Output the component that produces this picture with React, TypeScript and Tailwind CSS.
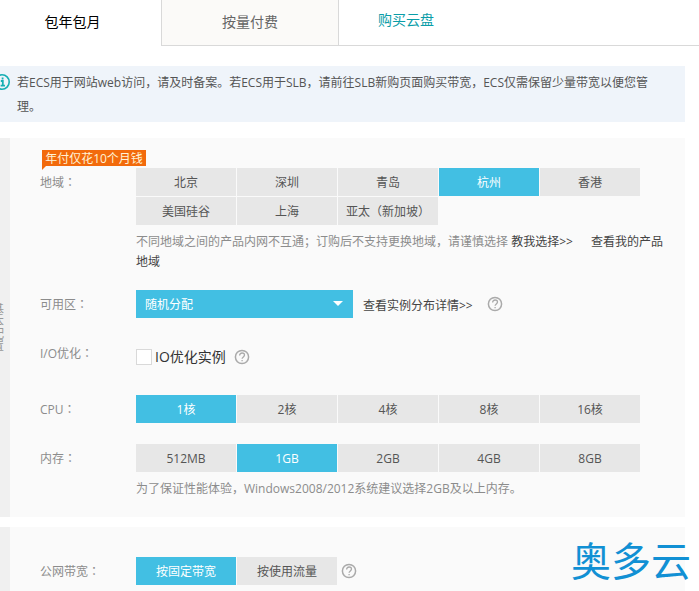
import { useState, type ReactNode } from "react";

type Option = { value: string; label: string };

const toOptions = (labels: string[]): Option[] =>
  labels.map((label) => ({ value: label, label }));

const regions = toOptions(["北京", "深圳", "青岛", "杭州", "香港", "美国硅谷", "上海", "亚太（新加坡）"]);
const cpus = toOptions(["1核", "2核", "4核", "8核", "16核"]);
const memories = toOptions(["512MB", "1GB", "2GB", "4GB", "8GB"]);
const billing = toOptions(["按固定带宽", "按使用流量"]);

function Segments({ name, options, initial }: { name: string; options: Option[]; initial: string }) {
  const [selected, setSelected] = useState(initial);
  return (
    <div role="group" aria-label={name} className="flex max-w-[505px] flex-wrap gap-px">
      {options.map((option) => (
        <button
          key={option.value}
          type="button"
          aria-pressed={option.value === selected}
          onClick={() => setSelected(option.value)}
          className={
            option.value === selected
              ? "h-7 w-[100px] whitespace-nowrap bg-[#42bfe3] pt-0.5 text-white"
              : "h-7 w-[100px] whitespace-nowrap bg-[#e7e7e7] pt-0.5 text-[#555]"
          }
        >
          {option.label}
        </button>
      ))}
    </div>
  );
}

function HelpButton({ label }: { label: string }) {
  return (
    <button type="button" aria-label={label} className="size-4 shrink-0 text-[#aaa]">
      <svg viewBox="0 0 16 16" className="size-4" fill="none" stroke="currentColor" aria-hidden="true">
        <circle cx="8" cy="8" r="6.6" strokeWidth="1.5" />
        <path d="M5.6 6.4c0-1.5 1-2.4 2.5-2.4 1.4 0 2.4.9 2.4 2.1 0 1.700-2.400 1.900-2.400 3.700" strokeWidth="1.3" />
        <path d="M8.1 10.900v1.400" strokeWidth="1.300" />
      </svg>
    </button>
  );
}

function Field({ label, children }: { label: string; children: ReactNode }) {
  return (
    <div className="flex items-start">
      <div className="w-24 shrink-0 leading-[30px] text-[#8c8c8c]">
        {label}
        <span className="font-['Noto_Sans_CJK_TC',sans-serif] leading-none">：</span>
      </div>
      <div className="min-w-0 flex-1">{children}</div>
    </div>
  );
}

function Panel({ title, children }: { title?: string; children: ReactNode }) {
  return (
    <section className="mr-3.5 flex bg-[#fafafa]">
      <div className="flex w-2.5 shrink-0 items-center justify-end overflow-hidden bg-[#f0f0f0]">
        {title && (
          <h2 className="mr-1.5 w-3 shrink-0 text-center leading-3 text-[#999]">{title}</h2>
        )}
      </div>
      <div className="min-w-0 flex-1 pl-[30px] pr-4">{children}</div>
    </section>
  );
}

export default function App() {
  return (
    <main className="relative overflow-hidden bg-white font-['Open_Sans','Noto_Sans_CJK_SC',sans-serif] text-xs">
      <nav className="flex h-[46px] text-sm">
        <button type="button" className="w-[161px] pb-0.5 pr-4 text-black">
          包年包月
        </button>
        <button type="button" className="w-[178px] border-x border-b border-[#d9d9d9] bg-[#fbfaf8] pb-0.5 text-[#666]">
          按量付费
        </button>
        <div className="flex-1 border-b border-[#d9d9d9] pl-[39px] pt-2.5 leading-5">
          <a href="#disk" className="text-[#0a9da8]">
            购买云盘
          </a>
        </div>
      </nav>

      <div className="mr-3.5 mt-5 flex bg-[#eff4fa] pb-[3px] pr-6 pt-[5px]">
        <svg viewBox="0 0 18 18" className="-ml-[7px] mr-1.5 mt-0.5 size-[18px] shrink-0" fill="none" stroke="#16aeb4" aria-hidden="true">
          <circle cx="9" cy="9" r="7.2" strokeWidth="1.6" />
          <path d="M9.600 4.600v1.900M7.800 8H9.800v4.500M7.600 12.600h4.400" strokeWidth="1.800" />
        </svg>
        <p className="leading-6 text-[#555]">
          若ECS用于网站web访问，请及时备案。若ECS用于SLB，请前往SLB新购页面购买带宽，ECS仅需保留少量带宽以便您管理。
        </p>
      </div>

      <div className="mt-4 flex flex-col gap-2.5">
        <Panel title="基本配置">
          <div className="flex h-[30px] items-end">
            <div className="relative mb-0.5 ml-0.5 h-4 w-[104px] bg-[#f26a0c] text-center leading-[18px] text-[#fff3d6]">
              年付仅花10个月钱
              <svg viewBox="0 0 4 4" className="absolute left-0 top-full size-1" aria-hidden="true">
                <path d="M0 0h4L0 4z" fill="#f26a0c" />
              </svg>
            </div>
          </div>
          <Field label="地域">
            <Segments name="地域" options={regions} initial="杭州" />
            <p className="mt-[7px] leading-5 text-[#8c8c8c]">
              不同地域之间的产品内网不互通；订购后不支持更换地域，请谨慎选择{" "}
              <a href="#guide" className="mr-[18px] text-[#444]">教我选择&gt;&gt;</a>
              <a href="#mine" className="text-[#444]">查看我的产品地域</a>
            </p>
          </Field>

          <div className="mt-[18px]">
            <Field label="可用区">
              <div className="flex items-center">
                <div className="relative w-[217px]">
                  <select aria-label="可用区" className="block h-7 w-full appearance-none bg-[#42bfe3] pl-[9px] pt-0.5 text-white">
                    <option>随机分配</option>
                  </select>
                  <svg viewBox="0 0 10 5" className="pointer-events-none absolute right-2.5 top-[11px] h-[5px] w-2.5" aria-hidden="true">
                    <path d="M0 0h10L5 5z" fill="#fff" />
                  </svg>
                </div>
                <a href="#zones" className="ml-2.5 mr-3.5 pt-[3px] text-[#444]">查看实例分布详情&gt;&gt;</a>
                <HelpButton label="可用区说明" />
              </div>
            </Field>
          </div>

          <div className="mt-[19px]">
            <Field label="I/O优化">
              <div className="flex h-9 items-center">
                <input
                  id="io"
                  type="checkbox"
                  className="size-4 appearance-none border border-[#d9d9d9] bg-white checked:bg-[#42bfe3]"
                />
                <label htmlFor="io" className="ml-[3px] mr-2 text-sm text-[#333]">IO优化实例</label>
                <HelpButton label="IO优化说明" />
              </div>
            </Field>
          </div>

          <div className="mt-5">
            <Field label="CPU">
              <Segments name="CPU" options={cpus} initial="1核" />
            </Field>
          </div>

          <div className="mt-[19px] pb-[18px]">
            <Field label="内存">
              <Segments name="内存" options={memories} initial="1GB" />
              <p className="mt-[7px] leading-5 text-[#8c8c8c]">
                为了保证性能体验，Windows2008/2012系统建议选择2GB及以上内存。
              </p>
            </Field>
          </div>
        </Panel>

        <Panel>
          <div className="pb-1 pt-[30px]">
            <Field label="公网带宽">
              <div className="flex items-center gap-1">
                <Segments name="公网带宽" options={billing} initial="按固定带宽" />
                <HelpButton label="公网带宽说明" />
              </div>
            </Field>
          </div>
        </Panel>
      </div>

      <div className="absolute bottom-0 right-2 text-[40px] leading-[60px] text-[#1190d4]">奥多云</div>
    </main>
  );
}
